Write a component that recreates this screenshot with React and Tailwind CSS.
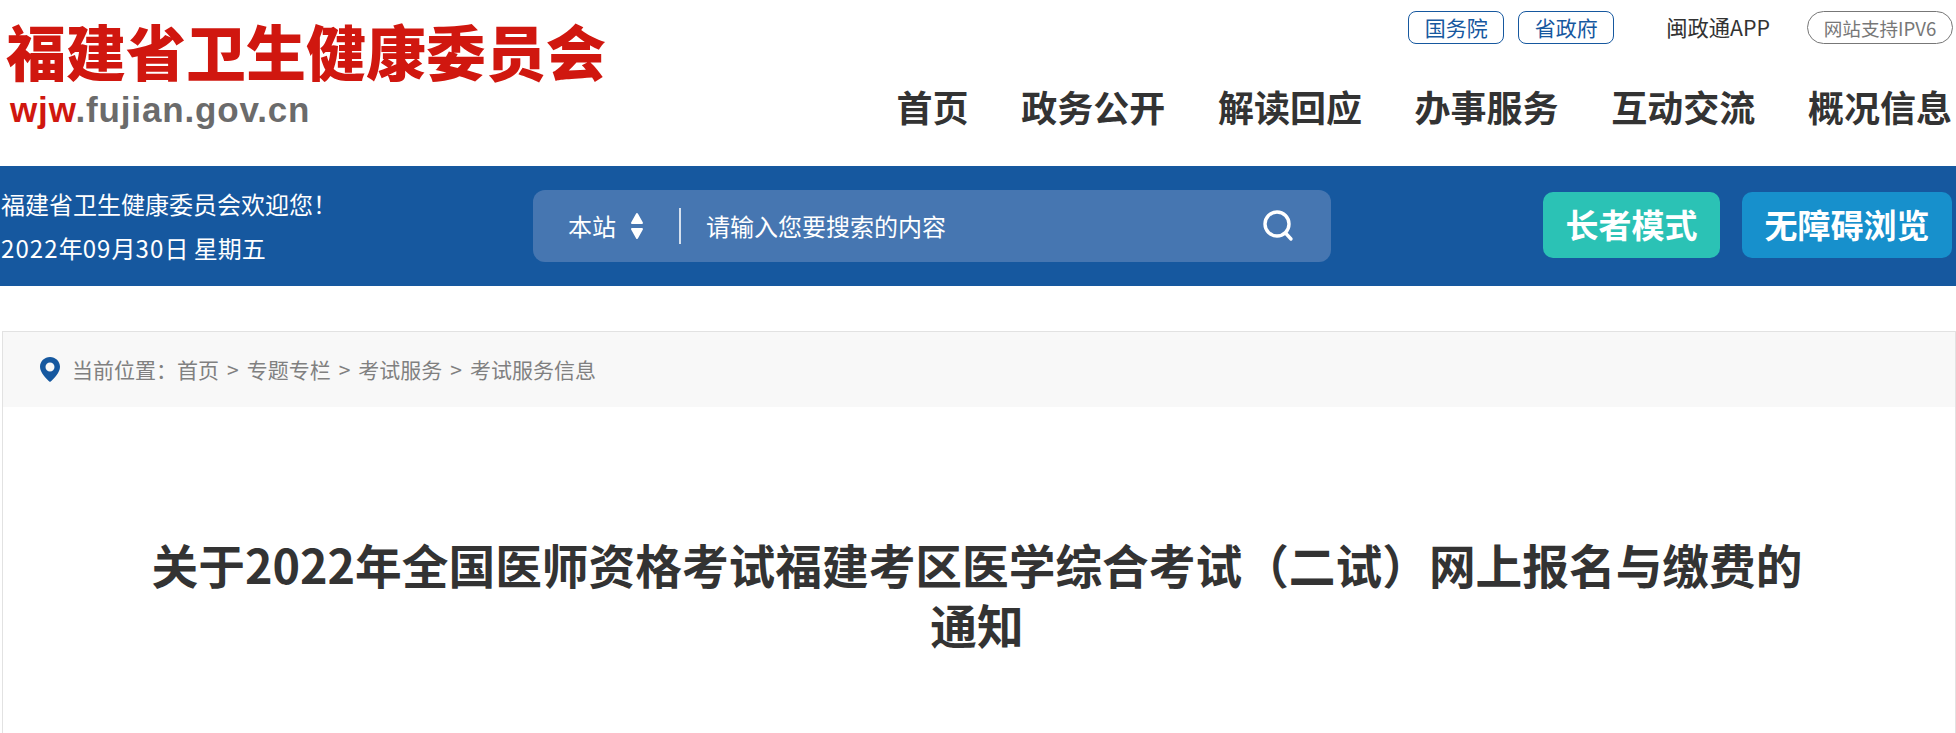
import React from 'react';

const navItems = ['首页', '政务公开', '解读回应', '办事服务', '互动交流', '概况信息'];
const crumbs = ['首页', '专题专栏', '考试服务', '考试服务信息'];

const Logo = () => (
  <div className="pl-[6px] pt-[20px]">
    <div className="text-[60px] leading-[60px] font-black text-[#d0170f] whitespace-nowrap">福建省卫生健康委员会</div>
    <div className="mt-[10px] pl-[4px] text-[35px] leading-[40px] font-bold tracking-[0.85px] font-['Liberation_Sans',sans-serif] whitespace-nowrap">
      <span className="text-[#d0170f]">wjw</span>
      <span className="text-[#6b6b6b]">.fujian.gov.cn</span>
    </div>
  </div>
);

const Header = () => (
  <header className="flex justify-between h-[166px]">
    <Logo />
    <div className="flex flex-col items-end pr-[4px]">
      <div className="flex items-center mt-[11px] h-[33px]">
        <a className="w-[96px] h-[33px] flex items-center justify-center border border-[#16589f] rounded-[8px] text-[21px] text-[#16589f]">国务院</a>
        <a className="w-[96px] h-[33px] ml-[14px] flex items-center justify-center border border-[#16589f] rounded-[8px] text-[21px] text-[#16589f]">省政府</a>
        <span className="ml-[52px] text-[21.3px] text-[#333333] -mt-[2px]">闽政通APP</span>
        <a className="w-[146px] h-[33px] ml-[37px] -mr-[1px] flex items-center justify-center border border-[#777777] rounded-full text-[18.6px] text-[#777777]">网站支持IPV6</a>
      </div>
      <nav className="flex gap-[52.7px] mt-[35px]">
        {navItems.map((item) => (
          <a key={item} className="text-[36px] leading-[54px] font-bold text-[#333333] whitespace-nowrap">{item}</a>
        ))}
      </nav>
    </div>
  </header>
);

const SearchIcon = () => (
  <svg width="34" height="34" viewBox="0 0 34 34" fill="none" stroke="white" strokeWidth="3.4" strokeLinecap="round">
    <circle cx="16" cy="15" r="12" />
    <path d="M24.5 24 L30 30" />
  </svg>
);

const UpDown = () => (
  <svg width="16" height="28" viewBox="0 0 16 28" fill="white" stroke="white" strokeWidth="2" strokeLinejoin="round" className="ml-[13px]">
    <path d="M8 2 L13 11 H3 Z" />
    <path d="M8 26 L13 17 H3 Z" />
  </svg>
);

const Banner = () => (
  <div className="flex items-center h-[120px] bg-[#16589f] text-white">
    <div className="w-[533px] pl-[1px] text-[24px] leading-[44px] whitespace-nowrap">
      <div>福建省卫生健康委员会欢迎您！</div>
      <div>
        <span className="tracking-[1.1px]">2022</span>年<span className="tracking-[1.1px]">09</span>月<span className="tracking-[1.1px]">30</span>日 星期五
      </div>
    </div>
    <div className="flex items-center w-[798px] h-[72px] bg-[#4676b1] rounded-[12px] pl-[35px] pr-[36px]">
      <span className="text-[24px]">本站</span>
      <UpDown />
      <div className="w-[2px] h-[36px] bg-[#d5e0ee] ml-[34px]"></div>
      <span className="flex-1 ml-[25px] text-[24px]">请输入您要搜索的内容</span>
      <SearchIcon />
    </div>
    <div className="flex items-center ml-[212px] -mt-[3px]">
      <a className="w-[177px] h-[66px] flex items-center justify-center rounded-[10px] bg-[#2bc2b5] text-[33px] font-bold">长者模式</a>
      <a className="w-[210px] h-[66px] ml-[22px] flex items-center justify-center rounded-[10px] bg-[#1790cc] text-[33px] font-bold">无障碍浏览</a>
    </div>
  </div>
);

const PinIcon = () => (
  <svg width="20" height="25" viewBox="0 0 20 25">
    <path fillRule="evenodd" fill="#16589f" d="M10 0 C4.5 0 0 4.3 0 9.7 C0 15.5 6 21.5 10 25 C14 21.5 20 15.5 20 9.7 C20 4.3 15.5 0 10 0 Z M10 5.5 A4.5 4.5 0 1 1 10 14.5 A4.5 4.5 0 1 1 10 5.5 Z" />
  </svg>
);

const Breadcrumb = () => (
  <div className="flex items-center h-[75px] bg-[#f8f8f8] pl-[37px] text-[21px] text-[#808080]">
    <PinIcon />
    <span className="ml-[12px]">当前位置：</span>
    {crumbs.map((c, i) => (
      <span key={c}>
        {i > 0 && <span className="mx-[8px]">&gt;</span>}
        {c}
      </span>
    ))}
  </div>
);

export default function App() {
  return (
    <div className="w-[1956px] h-[733px] overflow-hidden bg-white font-['Noto_Sans_CJK_SC',sans-serif]">
      <Header />
      <Banner />
      <main className="mt-[45px] ml-[2px] border border-[#e2e2e2] h-[500px]">
        <Breadcrumb />
        <h1 className="mt-[127px] pl-[140px] pr-[144px] text-center text-[46.7px] leading-[60px] font-bold text-[#333333]">
          关于2022年全国医师资格考试福建考区医学综合考试（二试）网上报名与缴费的通知
        </h1>
      </main>
    </div>
  );
}
